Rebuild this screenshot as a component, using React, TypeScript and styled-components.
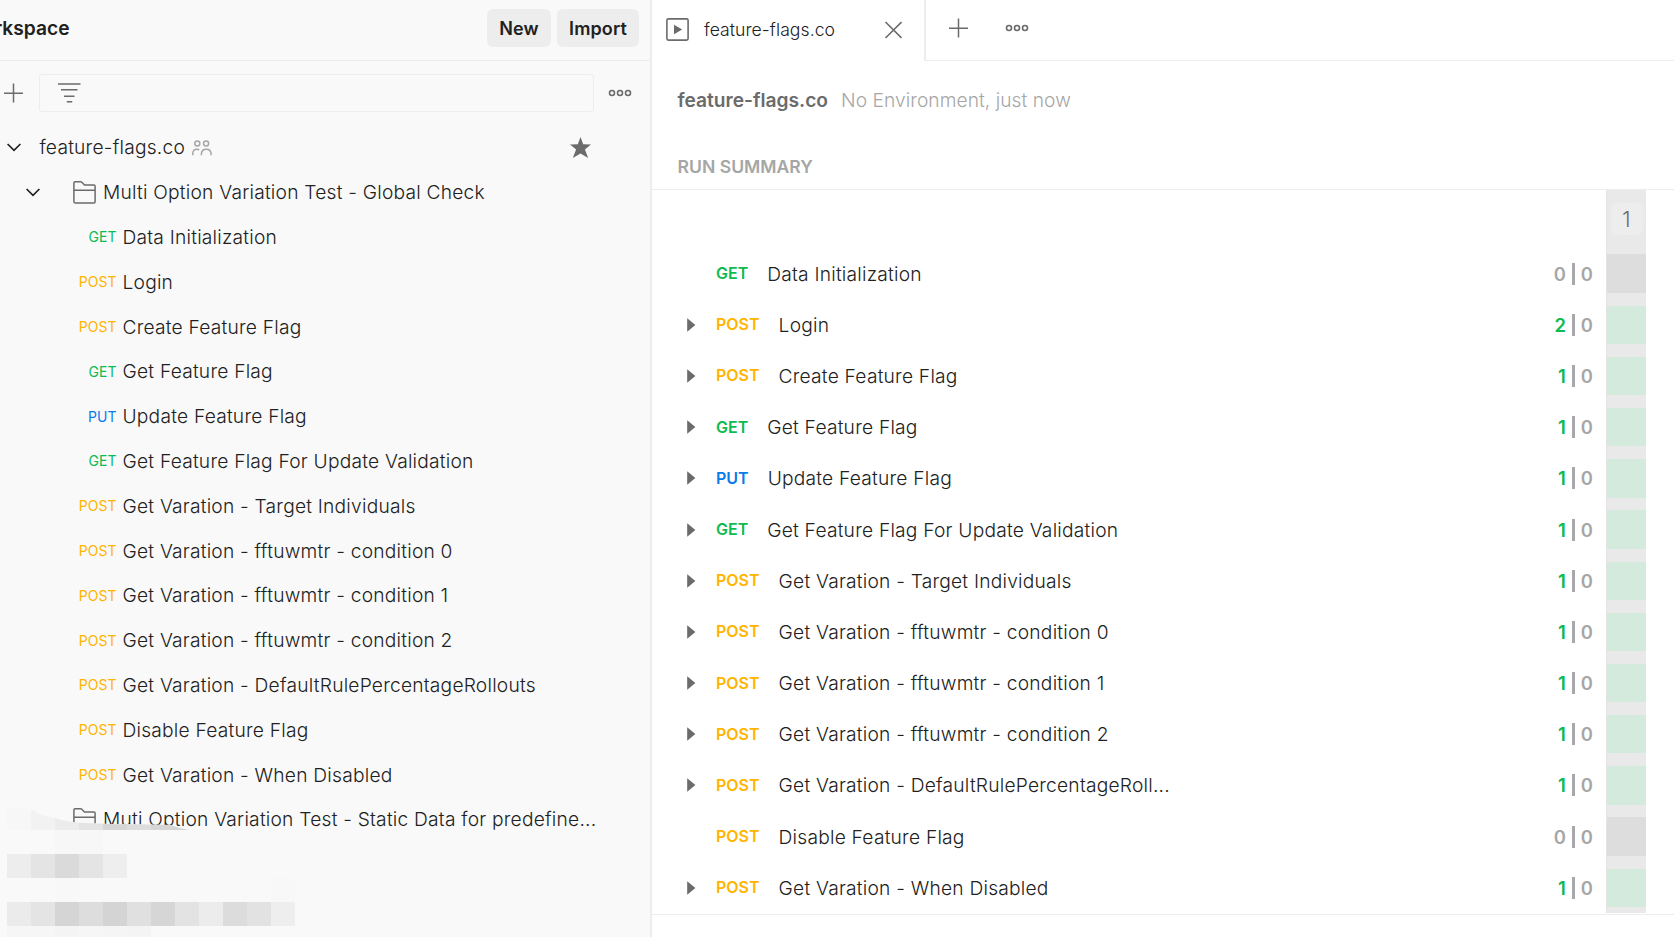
import React from "react";
import styled, { createGlobalStyle } from "styled-components";

const Global = createGlobalStyle`
  * { box-sizing: border-box; }
  body { margin: 0; background: #fff; font-family: Inter, "Liberation Sans", sans-serif; font-size: 19.2px; color: #212121; overflow: hidden; }
`;

type Method = "GET" | "POST" | "PUT";
const methodColor: Record<Method, string> = { GET: "#0cbb52", POST: "#ffb400", PUT: "#097bed" };

const requests: { method: Method; name: string; passed: number }[] = [
  { method: "GET", name: "Data Initialization", passed: 0 },
  { method: "POST", name: "Login", passed: 2 },
  { method: "POST", name: "Create Feature Flag", passed: 1 },
  { method: "GET", name: "Get Feature Flag", passed: 1 },
  { method: "PUT", name: "Update Feature Flag", passed: 1 },
  { method: "GET", name: "Get Feature Flag For Update Validation", passed: 1 },
  { method: "POST", name: "Get Varation - Target Individuals", passed: 1 },
  { method: "POST", name: "Get Varation - fftuwmtr - condition 0", passed: 1 },
  { method: "POST", name: "Get Varation - fftuwmtr - condition 1", passed: 1 },
  { method: "POST", name: "Get Varation - fftuwmtr - condition 2", passed: 1 },
  { method: "POST", name: "Get Varation - DefaultRulePercentageRollouts", passed: 1 },
  { method: "POST", name: "Disable Feature Flag", passed: 0 },
  { method: "POST", name: "Get Varation - When Disabled", passed: 1 },
];

const shorten = (name: string) => (name.length > 42 ? `${name.slice(0, 40)}...` : name);

const Screen = styled.div`
  display: flex;
  width: 1674px;
  height: 937px;
  overflow: hidden;
`;
const Sidebar = styled.aside`
  position: relative;
  flex: none;
  width: 652px;
  background: #f9f9f9;
  border-right: 2px solid #ededed;
  overflow: hidden;
`;
const SideHeader = styled.header`
  display: flex;
  align-items: center;
  gap: 6px;
  height: 61px;
  padding: 0 11px 4px 0;
  border-bottom: 1px solid #ededed;
`;
const WorkspaceName = styled.div`
  flex: 1;
  display: flex;
  justify-content: flex-end;
  max-width: 69.5px;
  margin-right: auto;
  font-weight: 600;
  white-space: nowrap;
`;
const HeaderButton = styled.button<{ $width: number }>`
  width: ${(p) => p.$width}px;
  height: 38px;
  padding: 1px 0 0;
  border: 0;
  border-radius: 6px;
  background: #ededed;
  color: #212121;
  font: 600 18px Inter, sans-serif;
  letter-spacing: 0.1px;
`;
const FilterBar = styled.div`
  display: flex;
  align-items: center;
  height: 64px;
  padding-left: 4px;
`;
const FilterBox = styled.div`
  display: flex;
  align-items: center;
  flex: none;
  width: 555px;
  height: 38px;
  margin: 0 14px 0 15px;
  padding-left: 18px;
  border: 1px solid #ededed;
  border-radius: 3px;
`;
const TreeRow = styled.div<{ $indent: number }>`
  display: flex;
  align-items: center;
  height: 44.8px;
  padding-left: ${(p) => p.$indent}px;
  white-space: nowrap;
`;
const TreeLabel = styled.span<{ $left: number }>`
  margin-left: ${(p) => p.$left}px;
  font-weight: 300;
  letter-spacing: 0.22px;
`;
const FolderSlot = styled.span`
  display: flex;
  margin-left: 33px;
`;
const PeopleSlot = styled.span`
  display: flex;
  margin-left: 7px;
  padding-top: 1px;
`;
const SideMethod = styled.span<{ $method: Method }>`
  width: 60px;
  text-align: right;
  font-size: 14px;
  color: ${(p) => methodColor[p.$method]};
`;
const StarSlot = styled.span`
  display: flex;
  margin-left: auto;
  padding-right: 59px;
`;
const Mosaic = styled.svg`
  position: absolute;
  left: 0;
  top: 800px;
`;

const Main = styled.main`
  flex: 1;
  display: flex;
  flex-direction: column;
  min-width: 0;
`;
const TabBar = styled.div`
  display: flex;
  flex: none;
  height: 61px;
`;
const Tab = styled.div`
  display: flex;
  align-items: center;
  width: 274px;
  padding: 0 22px 2px 14px;
  border-right: 2px solid #ededed;
`;
const TabLabel = styled.span`
  flex: 1;
  margin-left: 15px;
  padding-bottom: 1px;
  font-size: 17.6px;
  font-weight: 350;
  letter-spacing: 0.05px;
`;
const TabActions = styled.div`
  display: flex;
  flex: 1;
  align-items: center;
  gap: 36px;
  padding: 0 0 4px 23px;
  border-bottom: 1px solid #ededed;
`;
const RunHeader = styled.div`
  display: flex;
  align-items: center;
  gap: 13px;
  height: 78px;
  padding-left: 25.5px;
  color: #a6a6a6;
`;
const RunName = styled.strong`
  font-weight: 600;
  color: #6b6b6b;
`;
const RunMeta = styled.span`
  font-weight: 350;
  letter-spacing: 0.05px;
`;
const SummaryTitle = styled.div`
  display: flex;
  align-items: center;
  height: 51px;
  padding: 4px 0 0 25.5px;
  border-bottom: 1px solid #ededed;
  font-size: 17.6px;
  font-weight: 600;
  color: #a6a6a6;
`;
const Results = styled.section`
  display: flex;
  height: 725px;
  border-bottom: 1px solid #ededed;
`;
const ResultList = styled.div`
  flex: 1;
  padding-top: 58px;
`;
const ResultRow = styled.div`
  display: flex;
  align-items: center;
  height: 51.2px;
  padding: 0 13px 0 35px;
`;
const ArrowSlot = styled.span`
  display: flex;
  width: 29px;
`;
const ResultMethod = styled.span<{ $method: Method }>`
  margin-right: 19px;
  padding-bottom: 1px;
  font-size: 16px;
  font-weight: 600;
  color: ${(p) => methodColor[p.$method]};
`;
const ResultName = styled.span`
  font-weight: 300;
  letter-spacing: 0.22px;
  white-space: nowrap;
`;
const Counts = styled.span`
  display: flex;
  align-items: center;
  gap: 6px;
  margin-left: auto;
  font-size: 18.4px;
  font-weight: 600;
  color: #a6a6a6;
`;
const Passed = styled.span<{ $on: boolean }>`
  color: ${(p) => (p.$on ? "#0cbb52" : "#a6a6a6")};
`;
const Divider = styled.i`
  width: 3px;
  height: 22px;
  background: #a9a7a9;
`;
const Iteration = styled.div`
  width: 40px;
  height: 723px;
  margin-right: 28px;
  border-left: 1px solid #e4e4e4;
  background: #e9e9e9;
  overflow: hidden;
`;
const IterationHead = styled.div`
  display: flex;
  justify-content: center;
  height: 58px;
  padding-top: 13px;
`;
const IterationBadge = styled.span`
  width: 32px;
  height: 32px;
  border-radius: 6px;
  background: #ededed;
  color: #6b6b6b;
  font-size: 21px;
  font-weight: 350;
  line-height: 33px;
  text-align: center;
`;
const IterationCell = styled.div<{ $on: boolean }>`
  height: 38.4px;
  margin: 6.4px 0 12.8px;
  background: ${(p) => (p.$on ? "#d3eadc" : "#dddddd")};
`;

const Plus = () => (
  <svg width="20" height="20" viewBox="0 0 20 20" stroke="#6b6b6b" strokeWidth="1.5">
    <path d="M9.5 0.5v19M0 10.2h19" />
  </svg>
);
const Dots = () => (
  <svg width="24" height="8" viewBox="0 0 24 8" fill="none" stroke="#6b6b6b" strokeWidth="1.6">
    <circle cx="4" cy="4" r="2.5" />
    <circle cx="12" cy="4" r="2.5" />
    <circle cx="20" cy="4" r="2.5" />
  </svg>
);
const Filter = () => (
  <svg width="24" height="22" viewBox="0 0 24 22" stroke="#6b6b6b" strokeWidth="1.6">
    <path d="M0 2h22.5M3 7.7h16.5M6 14.2h10.5M8.8 19.8h5.4" />
  </svg>
);
const Chevron = () => (
  <svg width="14" height="9" viewBox="0 0 14 9" fill="none" stroke="#212121" strokeWidth="1.7">
    <path d="M0.6 1L7 7.3L13.4 1" />
  </svg>
);
const Folder = () => (
  <svg width="23" height="23" viewBox="0 0 23 23" fill="none" stroke="#6b6b6b" strokeWidth="1.5" strokeLinejoin="round">
    <path d="M0.9 20.6V2Q0.9 0.8 2.1 0.8H7.6Q8.3 0.8 8.8 1.3L11.5 4.1H20.9Q22.1 4.1 22.1 5.3V20.8Q22.1 22 20.9 22H2.1Q0.9 22 0.9 20.6ZM0.9 9.2H22.1" />
  </svg>
);
const People = () => (
  <svg width="20" height="16" viewBox="0 0 20 16" fill="none" stroke="#a6a6a6" strokeWidth="1.5">
    <circle cx="5.3" cy="3.4" r="2.5" />
    <circle cx="14.1" cy="3.4" r="2.5" />
    <path d="M0.8 15.3V13.2Q1 9.2 5 9.2Q6.3 9.2 7.3 9.8M9.4 15.3V13.8Q9.6 9.2 14.2 9.2Q18.9 9.2 19.1 13.8V15.3" />
  </svg>
);
const Star = () => (
  <svg width="21" height="21" viewBox="0 0 21 21" fill="#6b6b6b">
    <path d="M10.5 0L13.2 7.2L21 7.6L14.9 12.5L18.2 21L10.5 16.6L2.8 21L6.1 12.5L0 7.6L7.8 7.2Z" />
  </svg>
);
const RunnerIcon = () => (
  <svg width="23" height="23" viewBox="0 0 23 23" fill="none" stroke="#6b6b6b" strokeWidth="1.6">
    <rect x="0.9" y="0.9" width="21.2" height="21.2" rx="1.5" />
    <path d="M8 6.8V16.2L16.2 11.5Z" fill="#6b6b6b" stroke="none" />
  </svg>
);
const Close = () => (
  <svg width="18" height="18" viewBox="0 0 18 18" stroke="#6b6b6b" strokeWidth="1.6">
    <path d="M1.5 1L17.5 17M17.5 1L1.5 17" />
  </svg>
);
const Arrow = () => (
  <svg width="9" height="14" viewBox="0 0 9 14" fill="#6b6b6b">
    <path d="M0.2 0.3V13.7L8.4 7Z" />
  </svg>
);

const cellRows: { y: number; h: number; cells: [number, string][] }[] = [
  { y: 30, h: 24, cells: [[2, "#f7f7f7"], [3, "#f7f7f7"]] },
  { y: 54, h: 24, cells: [[0, "#ededed"], [1, "#e4e4e4"], [2, "#dadada"], [3, "#e4e4e4"], [4, "#eeeeee"]] },
  { y: 78, h: 24, cells: [[2, "#f8f8f8"], [11, "#f8f8f8"]] },
  {
    y: 102,
    h: 24,
    cells: [[0, "#ebebeb"], [1, "#e4e4e4"], [2, "#d5d5d5"], [3, "#dddddd"], [4, "#d4d4d4"], [5, "#e0e0e0"], [6, "#d6d6d6"], [7, "#e3e3e3"], [8, "#ececec"], [9, "#dcdcdc"], [10, "#e2e2e2"], [11, "#eeeeee"]],
  },
  { y: 126, h: 11, cells: [[0, "#f6f6f6"], [1, "#f6f6f6"], [2, "#f4f4f4"], [3, "#f6f6f6"], [4, "#f5f5f5"], [5, "#f4f4f4"]] },
];
const edgeColors = ["#f7f7f7", "#f2f2f2", "#ececec", "#e4e4e4", "#d6d6d6", "#dddddd", "#d6d6d6", "#d6d6d6"];

const Redaction = () => (
  <Mosaic width="300" height="137" viewBox="0 0 300 137">
    <clipPath id="edge">
      <path d="M0 7.5H25Q32 9 38 13Q43 16 55 18Q66 22 80 22.7Q100 24 133 24.3L170 25Q182 29 190 30V137H0Z" />
    </clipPath>
    <g clipPath="url(#edge)">
      <rect width="190" height="137" fill="#f9f9f9" />
      {edgeColors.map((c, i) => (
        <rect key={i} x={7 + i * 24} y="6" width="24" height="24" fill={c} />
      ))}
    </g>
    {cellRows.map((r) =>
      r.cells.map(([col, c]) => <rect key={`${r.y}-${col}`} x={7 + col * 24} y={r.y} width="24" height={r.h} fill={c} />)
    )}
  </Mosaic>
);

export default function App() {
  return (
    <Screen>
      <Global />
      <Sidebar>
        <SideHeader>
          <WorkspaceName>rkspace</WorkspaceName>
          <HeaderButton $width={64}>New</HeaderButton>
          <HeaderButton $width={82}>Import</HeaderButton>
        </SideHeader>
        <FilterBar>
          <Plus />
          <FilterBox>
            <Filter />
          </FilterBox>
          <Dots />
        </FilterBar>
        <TreeRow $indent={7}>
          <Chevron />
          <TreeLabel $left={18.5}>feature-flags.co</TreeLabel>
          <PeopleSlot>
            <People />
          </PeopleSlot>
          <StarSlot>
            <Star />
          </StarSlot>
        </TreeRow>
        <TreeRow $indent={26}>
          <Chevron />
          <FolderSlot>
            <Folder />
          </FolderSlot>
          <TreeLabel $left={7}>Multi Option Variation Test - Global Check</TreeLabel>
        </TreeRow>
        {requests.map((r) => (
          <TreeRow key={r.name} $indent={56.5}>
            <SideMethod $method={r.method}>{r.method}</SideMethod>
            <TreeLabel $left={6}>{r.name}</TreeLabel>
          </TreeRow>
        ))}
        <TreeRow $indent={73}>
          <Folder />
          <TreeLabel $left={7}>Muti Option Variation Test - Static Data for predefine...</TreeLabel>
        </TreeRow>
        <Redaction />
      </Sidebar>
      <Main>
        <TabBar>
          <Tab>
            <RunnerIcon />
            <TabLabel>feature-flags.co</TabLabel>
            <Close />
          </Tab>
          <TabActions>
            <Plus />
            <Dots />
          </TabActions>
        </TabBar>
        <RunHeader>
          <RunName>feature-flags.co</RunName>
          <RunMeta>No Environment, just now</RunMeta>
        </RunHeader>
        <SummaryTitle>RUN SUMMARY</SummaryTitle>
        <Results>
          <ResultList>
            {requests.map((r) => (
              <ResultRow key={r.name}>
                <ArrowSlot>{r.passed > 0 && <Arrow />}</ArrowSlot>
                <ResultMethod $method={r.method}>{r.method}</ResultMethod>
                <ResultName>{shorten(r.name)}</ResultName>
                <Counts>
                  <Passed $on={r.passed > 0}>{r.passed}</Passed>
                  <Divider />
                  <span>0</span>
                </Counts>
              </ResultRow>
            ))}
          </ResultList>
          <Iteration>
            <IterationHead>
              <IterationBadge>1</IterationBadge>
            </IterationHead>
            {requests.map((r) => (
              <IterationCell key={r.name} $on={r.passed > 0} />
            ))}
          </Iteration>
        </Results>
      </Main>
    </Screen>
  );
}
